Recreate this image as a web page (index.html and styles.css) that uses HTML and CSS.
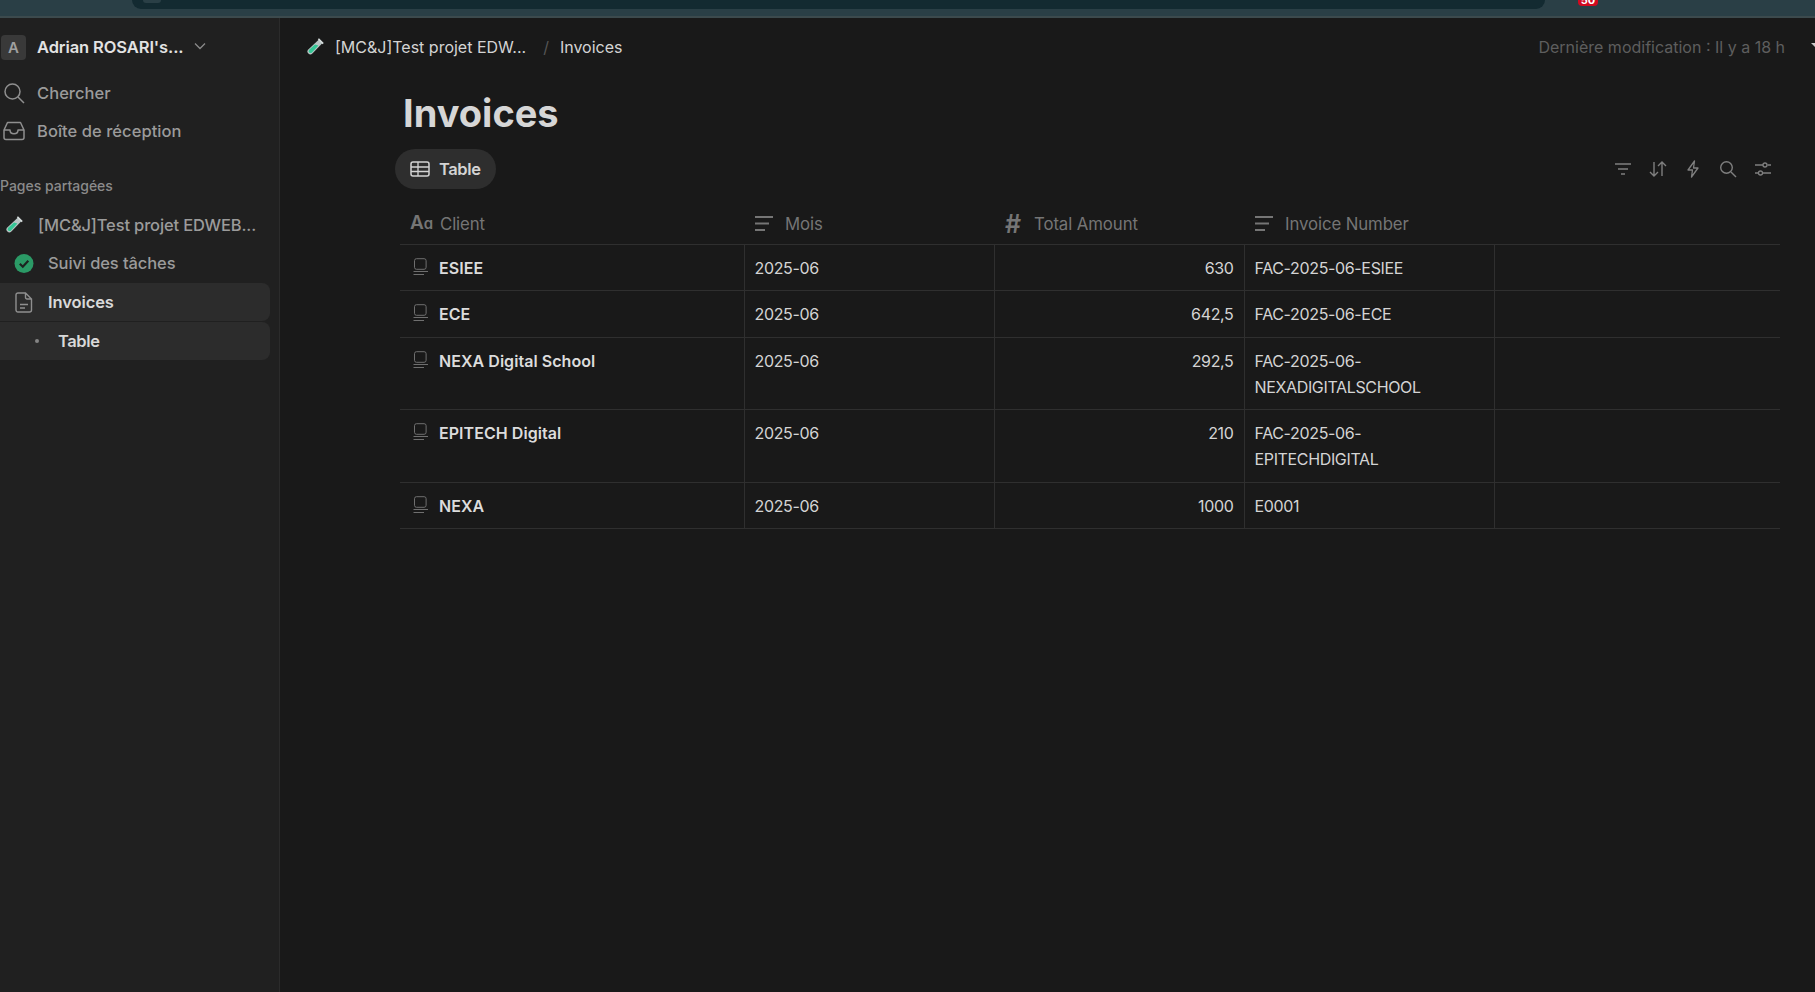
FILE: index.html
```html
<!DOCTYPE html>
<html lang="fr">
<head>
    <meta charset="UTF-8">
    <meta name="viewport" content="width=device-width, initial-scale=1.0">
    <title>Invoices</title>
    <link rel="stylesheet" href="styles.css">
</head>
<body>
    <svg class="sprites" width="0" height="0" aria-hidden="true">
        <symbol id="tube" viewBox="0 0 18 18">
            <path d="M13.2 1.2 16.8 4.8 6.4 15.6a2.9 2.9 0 0 1-4.100-4.100z" fill="#b9c4c4"/>
            <path d="M9 6.600 12.400 7.600 6 14.400a1.900 1.900 0 0 1-2.800-2.700z" fill="#35c796"/>
            <path d="M12.400 .8 17.200 5.600" stroke="#d5dcdc" stroke-width="1.600" fill="none"/>
        </symbol>
        <symbol id="lines" viewBox="0 0 18 15">
            <path d="M0 1h18M0 7.500h14M0 14h10" stroke="currentColor" stroke-width="2" fill="none"/>
        </symbol>
        <symbol id="rowdoc" viewBox="0 0 16 18">
            <rect x="1.500" y=".7" width="11.600" height="10.600" rx="2" stroke="currentColor" fill="none"/>
            <path d="M.5 13.500h14.500M.5 16.500h10.500" stroke="currentColor" fill="none"/>
        </symbol>
    </svg>

    <header class="topbar">
        <div class="urlbar"><span class="urlbar-dot"></span></div>
        <span class="ext-badge">50</span>
    </header>

    <div class="app">
        <aside class="sidebar">
            <div class="workspace">
                <span class="avatar">A</span>
                <span class="workspace-name">Adrian ROSARI's...</span>
                <svg class="chevron" viewBox="0 0 12 8"><path d="M1 1.500 6 6.500 11 1.500" stroke="currentColor" stroke-width="1.300" fill="none"/></svg>
            </div>
            <a class="nav-item nav-search">
                <svg class="nav-icon" viewBox="0 0 22 22"><circle cx="9.500" cy="9.500" r="7.500" stroke="currentColor" stroke-width="1.500" fill="none"/><path d="M15 15l6 6" stroke="currentColor" stroke-width="1.500"/></svg>
                Chercher
            </a>
            <a class="nav-item">
                <svg class="nav-icon" viewBox="0 0 22 20"><path d="M4.500 1.500h13L21 9v7.500a2 2 0 0 1-2 2H3a2 2 0 0 1-2-2V9zM1 9h6c0 5 8 5 8 0h6" stroke="currentColor" stroke-width="1.500" fill="none" stroke-linejoin="round"/></svg>
                Boîte de réception
            </a>
            <div class="section-label">Pages partagées</div>
            <a class="nav-item nav-page">
                <svg class="tube-icon"><use href="#tube"/></svg>
                [MC&amp;J]Test projet EDWEB...
            </a>
            <a class="nav-item nav-child">
                <svg class="check-icon" viewBox="0 0 20 20"><circle cx="10" cy="10" r="9.500" fill="#2b9a66"/><path d="M5.800 10.300 8.800 13.200 14.300 7.300" stroke="#1d2320" stroke-width="2.200" fill="none"/></svg>
                Suivi des tâches
            </a>
            <a class="nav-item nav-child active">
                <svg class="check-icon" viewBox="0 0 18 21"><path d="M3 1h7.500L16.500 7v11a2 2 0 0 1-2 2H3a2 2 0 0 1-2-2V3a2 2 0 0 1 2-2zM10.500 1v4.500a1.500 1.500 0 0 0 1.500 1.500h4.500M5 12.500h8M5 16h5" stroke="#8f8f8f" stroke-width="1.400" fill="none"/></svg>
                Invoices
            </a>
            <a class="nav-item nav-view active">
                <span class="bullet"></span>
                Table
            </a>
        </aside>

        <main class="main">
            <div class="crumbs">
                <div class="crumb-path">
                    <svg class="tube-icon"><use href="#tube"/></svg>
                    <span class="crumb-first">[MC&amp;J]Test projet EDW...</span>
                    <span class="crumb-sep">/</span>
                    <span>Invoices</span>
                </div>
                <div class="crumb-meta">
                    <span>Dernière modification : Il y a 18 h</span>
                    <span class="crumb-arrow"></span>
                </div>
            </div>

            <section class="page">
                <h1>Invoices</h1>
                <div class="viewbar">
                    <button class="view-tab" type="button">
                        <svg viewBox="0 0 20 16"><rect x="1" y="1" width="18" height="14" rx="2" stroke="currentColor" stroke-width="1.500" fill="none"/><path d="M1 6h18M1 10.500h18M8 1v14" stroke="currentColor" stroke-width="1.300"/></svg>
                        Table
                    </button>
                    <div class="tools">
                        <svg viewBox="0 0 18 18"><path d="M1 4h16M4 9h10M7 14h4" stroke="currentColor" stroke-width="1.400" fill="none"/></svg>
                        <svg viewBox="0 0 18 18"><path d="M5 2v14M1 12l4 4 4-4M13 16V2M9 6l4-4 4 4" stroke="currentColor" stroke-width="1.400" fill="none"/></svg>
                        <svg viewBox="0 0 18 18"><path d="M10.500 1 4 10h4.500l-1 7L14 8H9.500z" stroke="currentColor" stroke-width="1.300" fill="none" stroke-linejoin="round"/></svg>
                        <svg viewBox="0 0 18 18"><circle cx="7.500" cy="7.500" r="5.800" stroke="currentColor" stroke-width="1.400" fill="none"/><path d="M12 12l5 5" stroke="currentColor" stroke-width="1.400"/></svg>
                        <svg viewBox="0 0 18 18"><path d="M1 5h8M13.500 5H17M1 13h3.500M9 13h8" stroke="currentColor" stroke-width="1.300"/><circle cx="11" cy="5" r="2" stroke="currentColor" stroke-width="1.300" fill="none"/><circle cx="6.500" cy="13" r="2" stroke="currentColor" stroke-width="1.300" fill="none"/></svg>
                    </div>
                </div>

                <table class="db-table">
                    <colgroup>
                        <col class="col-client">
                        <col class="col-data">
                        <col class="col-data">
                        <col class="col-data">
                        <col>
                    </colgroup>
                    <thead>
                        <tr>
                            <th><span class="th-inner"><span class="aa-icon">A<span class="aa-small">ɑ</span></span>Client</span></th>
                            <th><span class="th-inner"><svg class="th-icon"><use href="#lines"/></svg>Mois</span></th>
                            <th><span class="th-inner"><span class="hash-icon">#</span>Total Amount</span></th>
                            <th><span class="th-inner"><svg class="th-icon"><use href="#lines"/></svg>Invoice Number</span></th>
                            <th></th>
                        </tr>
                    </thead>
                    <tbody>
                        <tr>
                            <td class="cell-title"><svg class="row-icon"><use href="#rowdoc"/></svg>ESIEE</td>
                            <td>2025-06</td>
                            <td class="num">630</td>
                            <td>FAC-2025-06-ESIEE</td>
                            <td></td>
                        </tr>
                        <tr>
                            <td class="cell-title"><svg class="row-icon"><use href="#rowdoc"/></svg>ECE</td>
                            <td>2025-06</td>
                            <td class="num">642,5</td>
                            <td>FAC-2025-06-ECE</td>
                            <td></td>
                        </tr>
                        <tr>
                            <td class="cell-title"><svg class="row-icon"><use href="#rowdoc"/></svg>NEXA Digital School</td>
                            <td>2025-06</td>
                            <td class="num">292,5</td>
                            <td>FAC-2025-06-<br>NEXADIGITALSCHOOL</td>
                            <td></td>
                        </tr>
                        <tr>
                            <td class="cell-title"><svg class="row-icon"><use href="#rowdoc"/></svg>EPITECH Digital</td>
                            <td>2025-06</td>
                            <td class="num">210</td>
                            <td>FAC-2025-06-<br>EPITECHDIGITAL</td>
                            <td></td>
                        </tr>
                        <tr>
                            <td class="cell-title"><svg class="row-icon"><use href="#rowdoc"/></svg>NEXA</td>
                            <td>2025-06</td>
                            <td class="num">1000</td>
                            <td>E0001</td>
                            <td></td>
                        </tr>
                    </tbody>
                </table>
            </section>
        </main>
    </div>
</body>
</html>
```

FILE: styles.css
```css
* {
    box-sizing: border-box;
}
html, body {
    height: 100%;
}
body {
    margin: 0;
    display: flex;
    flex-direction: column;
    overflow: hidden;
    background: #191919;
    color: #d4d4d4;
    font-family: 'Inter', 'Liberation Sans', sans-serif;
    font-size: 16px;
}
.sprites {
    position: absolute;
}
.topbar {
    flex: none;
    height: 18px;
    padding-left: 132px;
    display: flex;
    align-items: flex-start;
    gap: 33px;
    overflow: hidden;
    background: #2a3f46;
    border-bottom: 2px solid #3c4a4d;
}
.urlbar {
    width: 1413px;
    height: 9px;
    padding-left: 11px;
    background: #132a31;
    border-radius: 0 0 14px 14px;
}
.urlbar-dot {
    display: block;
    width: 18px;
    height: 3px;
    background: #2a3f46;
    border-radius: 0 0 9px 9px;
}
.ext-badge {
    width: 20px;
    height: 6px;
    background: #d3091f;
    border-radius: 0 0 4px 4px;
    color: #fff;
    font-size: 11px;
    font-weight: 700;
    line-height: 0;
    text-align: center;
}
.app {
    flex: 1;
    display: flex;
    min-height: 0;
}

/* sidebar */
.sidebar {
    flex: none;
    width: 280px;
    padding: 16px 9px 0 0;
    background: #202020;
    border-right: 1px solid #2b2b2b;
}
.workspace {
    display: flex;
    align-items: center;
    height: 26px;
    padding-left: 1px;
    margin-bottom: 14px;
    color: #e3e3e3;
    font-weight: 600;
}
.avatar {
    width: 25px;
    height: 25px;
    margin-right: 11px;
    background: #393939;
    border-radius: 4px;
    color: #a0a0a0;
    font-size: 15px;
    line-height: 25px;
    text-align: center;
}
.workspace-name {
    font-size: 16.500px;
    letter-spacing: -.1px;
}
.chevron {
    width: 12px;
    height: 8px;
    margin-left: 11px;
    margin-top: -2px;
    color: #8a8a8a;
}
.nav-item {
    display: flex;
    align-items: center;
    height: 38px;
    color: #9b9b9b;
    font-weight: 500;
    font-size: 16.500px;
    letter-spacing: .05px;
    white-space: nowrap;
    border-radius: 0 8px 8px 0;
}
.nav-icon {
    flex: none;
    width: 22px;
    height: 22px;
    margin: 0 12px 0 3px;
    color: #8f8f8f;
}
.section-label {
    margin: 26px 0 10px;
    color: #8b8b8b;
    font-size: 14px;
    font-weight: 500;
    line-height: 20px;
}
.nav-page {
    letter-spacing: -.15px;
}
.nav-page .tube-icon {
    margin: 0 15px 0 5px;
}
.nav-child {
    padding-left: 14px;
    letter-spacing: -.1px;
}
.check-icon {
    flex: none;
    width: 20px;
    height: 21px;
    margin-right: 14px;
}
.nav-child.active {
    margin-top: 1px;
}
.nav-view {
    padding-left: 35px;
    margin-top: 1px;
    letter-spacing: -.4px;
}
.active {
    background: #2c2c2c;
    color: #d9d9d9;
    font-weight: 600;
}
.bullet {
    width: 4px;
    height: 4px;
    margin-right: 19px;
    background: #858585;
    border-radius: 50%;
}
.tube-icon {
    flex: none;
    width: 18px;
    height: 18px;
}

/* main */
.main {
    flex: 1;
    min-width: 0;
}
.crumbs {
    display: flex;
    justify-content: space-between;
    align-items: center;
    height: 58px;
    padding-left: 26px;
}
.crumb-path {
    display: flex;
    align-items: center;
    color: #d4d4d4;
    font-size: 16px;
}
.crumb-first {
    margin-left: 11px;
}
.crumb-sep {
    margin: 0 11px 0 17px;
    color: #555;
}
.crumb-meta {
    display: flex;
    align-items: center;
    color: #5e5e5e;
    font-size: 16px;
}
.crumb-arrow {
    width: 0;
    height: 0;
    margin: -4px 0 0 26px;
    border-left: 4px solid transparent;
    border-top: 4px solid #c8c8c8;
}
.page {
    padding: 0 35px 0 115px;
}
h1 {
    margin: 0;
    padding: 14px 0 0 8px;
    height: 73px;
    color: #d6d6d6;
    font-size: 38px;
    font-weight: 700;
    line-height: 46px;
}
.viewbar {
    display: flex;
    justify-content: space-between;
    align-items: center;
    height: 40px;
    margin-bottom: 15px;
}
.view-tab {
    display: flex;
    align-items: center;
    gap: 9px;
    width: 101px;
    height: 40px;
    padding: 0 0 0 15px;
    border: 0;
    border-radius: 20px;
    background: #2e2e2e;
    color: #d4d4d4;
    font: 600 16.500px 'Inter', 'Liberation Sans', sans-serif;
    letter-spacing: -.4px;
}
.view-tab svg {
    width: 20px;
    height: 16px;
}
.tools {
    display: flex;
    gap: 17px;
    padding-right: 8px;
    color: #7f7f7f;
}
.tools svg {
    width: 18px;
    height: 18px;
}

/* table */
.db-table {
    width: 1380px;
    margin-left: 5px;
    border-collapse: collapse;
    table-layout: fixed;
    font-size: 16px;
    letter-spacing: -.35px;
}
.col-client {
    width: 344px;
}
.col-data {
    width: 250px;
}
th {
    height: 40px;
    padding: 0 0 0 11px;
    border-bottom: 1px solid #2f2f2f;
    color: #757575;
    font-size: 16.800px;
    font-weight: 400;
    letter-spacing: -.1px;
    text-align: left;
}
.th-inner {
    display: flex;
    align-items: center;
}
.th-icon {
    width: 18px;
    height: 15px;
    margin-right: 12px;
    color: #757575;
}
.aa-icon {
    width: 30px;
    margin: -3px 0 0 -1px;
    font-size: 19px;
    font-weight: 600;
}
.aa-small {
    font-size: 15px;
}
.hash-icon {
    width: 29px;
    font-size: 25px;
    font-weight: 600;
    line-height: 20px;
}
td {
    padding: 10px 10px 9.500px;
    border: 1px solid #2f2f2f;
    border-top: 0;
    line-height: 26px;
    vertical-align: top;
}
td:first-child {
    border-left: 0;
}
td:last-child {
    border-right: 0;
}
.num {
    text-align: right;
}
.cell-title {
    padding-left: 13px;
    color: #dcdcdc;
    font-weight: 600;
    letter-spacing: .05px;
}
.row-icon {
    width: 16px;
    height: 18px;
    margin-right: 10px;
    color: #6f6f6f;
    vertical-align: -2px;
}
```
